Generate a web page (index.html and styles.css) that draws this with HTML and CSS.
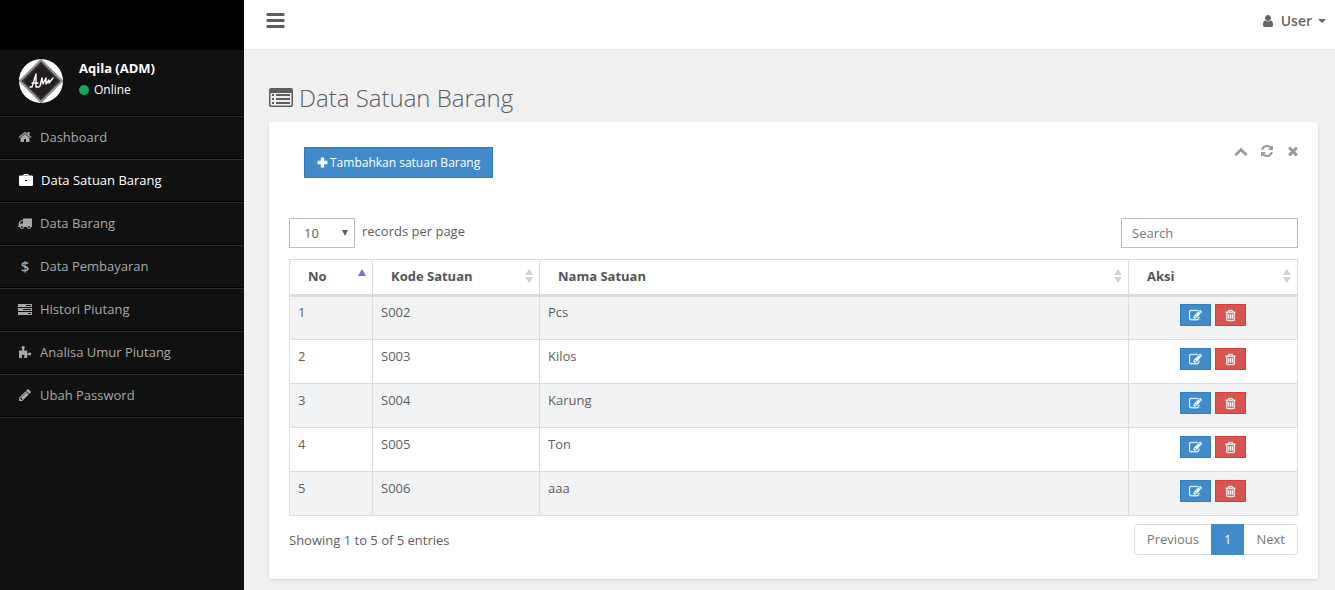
FILE: index.html
```html
<!DOCTYPE html>
<html lang="id">
<head>
<meta charset="utf-8">
<title>Data Satuan Barang</title>
<link rel="stylesheet" href="styles.css">
</head>
<body>
<svg class="sprite" aria-hidden="true">
  <symbol id="home" viewBox="0 0 1792 1792"><path d="M1472 992v480q0 26-19 45t-45 19h-384v-384h-256v384h-384q-26 0-45-19t-19-45v-480q0-1 .5-3t.5-3l575-474 575 474q1 2 1 6zm223-69l-62 74q-8 9-21 11h-3q-13 0-21-7l-692-577-692 577q-12 8-24 7-13-2-21-11l-62-74q-8-10-7-23.500t11-21.500l719-599q32-26 76-26t76 26l244 204v-195q0-14 9-23t23-9h192q14 0 23 9t9 23v408l219 182q10 8 11 21.500t-7 23.500z"/></symbol>
  <symbol id="briefcase" viewBox="0 0 14 14"><path fill-rule="evenodd" d="M4.500 2.500V1.500Q4.500 1 5 1H9Q9.500 1 9.500 1.500V2.500H12.800Q14 2.500 14 3.700V11.800Q14 13 12.800 13H1.200Q0 13 0 11.800V3.700Q0 2.500 1.200 2.500ZM5.500 2.500H8.500V2H5.500ZM6 7V8H8V7Z"/></symbol>
  <symbol id="truck" viewBox="0 0 14 14"><path fill-rule="evenodd" d="M5.500 2.500H13.500Q14 2.500 14 3V10.500Q14 11 13.500 11H12.900A1.900 1.900 0 0 1 9.100 11H5.900A1.900 1.900 0 0 1 2.100 11H.5Q0 11 0 10.500V10L.7 9.500V7Q.7 6.600 1 6.300L2.700 4.600Q3 4.300 3.500 4.300H5V3Q5 2.500 5.500 2.500ZM1.800 7.500H5V5.300H3.600L1.800 7ZM4 10.100A.9.9 0 1 0 4 11.900A.9.9 0 1 0 4 10.100ZM11 10.100A.9.9 0 1 0 11 11.900A.9.9 0 1 0 11 10.100Z"/></symbol>
  <symbol id="tasks" viewBox="0 0 14 14"><path fill-rule="evenodd" d="M0 2H14V5H0ZM8 3V4H13V3ZM0 6H14V9H0ZM5 7V8H13V7ZM0 10H14V13H0ZM10 11V12H13V11Z"/></symbol>
  <symbol id="puzzle" viewBox="0 0 14 14"><path d="M1 5.500H4.300Q4.500 4.500 3.900 3.700Q3.200 2.600 3.700 1.700Q4.200 1 5.200 1Q6.300 1 6.700 1.800Q7.100 2.700 6.400 3.700Q5.800 4.700 6.100 5.500H9.200V8.300Q9.900 8.700 10.700 8Q11.800 7.100 12.700 7.700Q13.300 8.200 13.200 9.200Q13.100 10.100 12.300 10.400Q11.500 10.700 10.700 10.100Q9.800 9.400 9.200 9.900V13H6.400Q5.700 12.300 6.300 11.500Q6.800 10.400 6 9.900Q5 9.400 4.100 10Q3.400 10.600 4 11.600Q4.400 12.400 3.900 13H1Z"/></symbol>
  <symbol id="pencil" viewBox="0 0 1792 1792"><path d="M491 1536l91-91-235-235-91 91v107h128v128h107zm523-928q0-22-22-22-10 0-17 7l-542 542q-7 7-7 17 0 22 22 22 10 0 17-7l542-542q7-7 7-17zm-54-192l416 416-832 832h-416v-416zm683 96q0 53-37 90l-166 166-416-416 166-165q36-38 90-38 53 0 91 38l235 234q37 39 37 91z"/></symbol>
  <symbol id="user" viewBox="0 0 1792 1792"><path d="M1536 1399q0 109-62.500 187t-150.500 78h-854q-88 0-150.500-78t-62.500-187q0-85 8.500-160.500t31.500-152 58.500-131 94-89 134.500-34.500q131 128 313 128t313-128q76 0 134.500 34.500t94 89 58.500 131 31.500 152 8.500 160.500zm-256-887q0 159-112.500 271.500t-271.500 112.500-271.500-112.500-112.500-271.500 112.500-271.500 271.500-112.500 271.500 112.500 112.500 271.500z"/></symbol>
  <symbol id="bars" viewBox="0 0 18 16"><path d="M.5 0H17.500L18 .5V2.500L17.500 3H.5L0 2.500V.5ZM.5 6H17.500L18 6.500V8.500L17.500 9H.5L0 8.500V6.500ZM.5 12H17.500L18 12.500V14.500L17.500 15H.5L0 14.500V12.500Z"/></symbol>
  <symbol id="list-alt" viewBox="0 0 25 20"><path fill-rule="evenodd" d="M2 0H22Q24 0 24 2V17Q24 19 22 19H2Q0 19 0 17V2Q0 0 2 0ZM1.500 5V16.500Q1.500 17.500 2.500 17.500H21.500Q22.500 17.500 22.500 16.500V5ZM3 6H5V8H3ZM7 6H21V8H7ZM3 10H5V12H3ZM7 10H21V12H7ZM3 14H5V16H3ZM7 14H21V16H7Z"/></symbol>
  <symbol id="plus" viewBox="0 0 10 10"><path d="M3.500.5H6.500V3.500H9.500V6.500H6.500V9.500H3.500V6.500H.5V3.500H3.500Z"/></symbol>
  <symbol id="up" viewBox="0 0 1792 1792"><path d="M1683 1331l-166 165q-19 19-45 19t-45-19l-531-531-531 531q-19 19-45 19t-45-19l-166-165q-19-19-19-45.500t19-45.500l742-741q19-19 45-19t45 19l742 741q19 19 19 45.500t-19 45.500z"/></symbol>
  <symbol id="refresh" viewBox="0 0 1792 1792"><path d="M1639 1056q0 5-1 7-64 268-268 434.500t-478 166.500q-146 0-282.500-55t-243.500-157l-129 129q-19 19-45 19t-45-19-19-45v-448q0-26 19-45t45-19h448q26 0 45 19t19 45-19 45l-137 137q71 66 161 102t187 36q134 0 250-65t186-179q11-17 53-117 8-23 30-23h192q13 0 22.500 9.500t9.500 22.500zm25-800v448q0 26-19 45t-45 19h-448q-26 0-45-19t-19-45 19-45l138-138q-148-137-349-137-134 0-250 65t-186 179q-11 17-53 117-8 23-30 23h-199q-13 0-22.500-9.500t-9.500-22.500v-7q65-268 270-434.500t480-166.500q146 0 284 55.500t245 156.500l130-129q19-19 45-19t45 19 19 45z"/></symbol>
  <symbol id="times" viewBox="0 0 1792 1792"><path d="M1490 1322q0 40-28 68l-136 136q-28 28-68 28t-68-28l-294-294-294 294q-28 28-68 28t-68-28l-136-136q-28-28-28-68t28-68l294-294-294-294q-28-28-28-68t28-68l136-136q28-28 68-28t68 28l294 294 294-294q28-28 68-28t68 28l136 136q28 28 28 68t-28 68l-294 294 294 294q28 28 28 68z"/></symbol>
  <symbol id="edit" viewBox="0 0 1792 1792"><path d="M888 1184l116-116-152-152-116 116v56h96v96h56zm440-720q-16-16-33 1l-350 350q-17 17-1 33t33-1l350-350q17-17 1-33zm80 594v190q0 119-84.500 203.500t-203.500 84.500h-832q-119 0-203.500-84.500t-84.500-203.500v-832q0-119 84.500-203.500t203.500-84.500h832q63 0 117 25 15 7 18 23 3 17-9 29l-49 49q-14 14-32 8-23-6-45-6h-832q-66 0-113 47t-47 113v832q0 66 47 113t113 47h832q66 0 113-47t47-113v-126q0-13 9-22l64-64q15-15 35-7t20 29zm-96-738l288 288-672 672h-288v-288zm444 132l-92 92-288-288 92-92q28-28 68-28t68 28l152 152q28 28 28 68t-28 68z"/></symbol>
  <symbol id="trash" viewBox="0 0 1792 1792"><path d="M704 736v576q0 14-9 23t-23 9h-64q-14 0-23-9t-9-23v-576q0-14 9-23t23-9h64q14 0 23 9t9 23zm256 0v576q0 14-9 23t-23 9h-64q-14 0-23-9t-9-23v-576q0-14 9-23t23-9h64q14 0 23 9t9 23zm256 0v576q0 14-9 23t-23 9h-64q-14 0-23-9t-9-23v-576q0-14 9-23t23-9h64q14 0 23 9t9 23zm128 724v-948h-896v948q0 22 7 40.500t14.500 27 10.500 8.500h832q3 0 10.500-8.500t14.500-27 7-40.500zm-672-1076h448l-48-117q-7-9-17-11h-317q-10 2-17 11zm928 32v64q0 14-9 23t-23 9h-96v948q0 83-47 143.500t-113 60.500h-832q-66 0-113-58.500t-47-141.500v-952h-96q-14 0-23-9t-9-23v-64q0-14 9-23t23-9h309l70-167q15-37 54-63t79-26h320q40 0 79 26t54 63l70 167h309q14 0 23 9t9 23z"/></symbol>
  <symbol id="down-tri" viewBox="0 0 8 6"><path d="M1 0H7L4 6Z"/></symbol>
  <symbol id="caret" viewBox="0 0 8 4"><path d="M0 0H8L4 4Z"/></symbol>
  <symbol id="sort" viewBox="0 0 8 14"><path d="M0 6L4 0L8 6ZM0 8H8L4 14Z"/></symbol>
  <symbol id="sort-asc" viewBox="0 0 8 14"><path d="M0 7L4 0L8 7Z"/></symbol>
</svg>
<div class="app">
  <aside class="sidebar">
    <div class="brand"></div>
    <div class="profile">
      <svg class="avatar" viewBox="0 0 46 46" role="img" aria-label="Aqila">
        <circle cx="23" cy="23" r="22" fill="#fff"/>
        <path d="M23 1L45 23L23 45L1 23Z" fill="#333"/>
        <path d="M23 2.500L43.500 23L23 43.500L2.500 23Z" fill="none" stroke="#999" stroke-width="1.500"/>
        <path d="M23 6L40 23L23 40L6 23Z" fill="#211d1d"/>
        <path d="M12 29L14 29L18 16L18 29L21 29M14 25L20 25M22 28L24 20L25 26L28 20L28 26L31 22L31 25L35 20" fill="none" stroke="#fff" stroke-width="1.400" stroke-linecap="round" stroke-linejoin="round"/>
      </svg>
      <div class="who">
        <strong>Aqila (ADM)</strong>
        <span class="status"><i class="dot"></i>Online</span>
      </div>
    </div>
    <nav class="menu">
      <a href="#"><svg class="icon"><use href="#home"/></svg>Dashboard</a>
      <a href="#" class="active"><svg class="icon"><use href="#briefcase"/></svg>Data Satuan Barang</a>
      <a href="#"><svg class="icon"><use href="#truck"/></svg>Data Barang</a>
      <a href="#"><span class="icon dollar" aria-hidden="true">$</span>Data Pembayaran</a>
      <a href="#"><svg class="icon"><use href="#tasks"/></svg>Histori Piutang</a>
      <a href="#"><svg class="icon"><use href="#puzzle"/></svg>Analisa Umur Piutang</a>
      <a href="#"><svg class="icon"><use href="#pencil"/></svg>Ubah Password</a>
    </nav>
  </aside>
  <div class="main">
    <header class="topbar">
      <button class="plain" aria-label="Menu"><svg class="bars"><use href="#bars"/></svg></button>
      <button class="plain user"><svg class="icon"><use href="#user"/></svg>User<svg class="caret"><use href="#caret"/></svg></button>
    </header>
    <main class="content">
      <h1><svg class="title-icon"><use href="#list-alt"/></svg>Data Satuan Barang</h1>
      <section class="card">
        <div class="card-head">
          <button class="add"><svg class="plus"><use href="#plus"/></svg>Tambahkan satuan Barang</button>
          <div class="tools">
            <button class="plain" aria-label="Collapse"><svg class="icon"><use href="#up"/></svg></button>
            <button class="plain" aria-label="Refresh"><svg class="icon"><use href="#refresh"/></svg></button>
            <button class="plain" aria-label="Close"><svg class="icon"><use href="#times"/></svg></button>
          </div>
        </div>
        <div class="filters">
          <label class="length"><span class="select-wrap"><select><option>10</option><option>25</option><option>50</option></select><svg class="arrow"><use href="#down-tri"/></svg></span>records per page</label>
          <input class="search" type="text" placeholder="Search" aria-label="Search">
        </div>
        <table>
          <colgroup><col class="c-no"><col class="c-code"><col><col class="c-act"></colgroup>
          <thead>
            <tr>
              <th><div class="th asc">No<svg><use href="#sort-asc"/></svg></div></th>
              <th><div class="th">Kode Satuan<svg><use href="#sort"/></svg></div></th>
              <th><div class="th">Nama Satuan<svg><use href="#sort"/></svg></div></th>
              <th><div class="th">Aksi<svg><use href="#sort"/></svg></div></th>
            </tr>
          </thead>
          <tbody>
            <tr><td>1</td><td>S002</td><td>Pcs</td><td><div class="actions"><button class="edit" aria-label="Edit"><svg><use href="#edit"/></svg></button><button class="delete" aria-label="Delete"><svg><use href="#trash"/></svg></button></div></td></tr>
            <tr><td>2</td><td>S003</td><td>Kilos</td><td><div class="actions"><button class="edit" aria-label="Edit"><svg><use href="#edit"/></svg></button><button class="delete" aria-label="Delete"><svg><use href="#trash"/></svg></button></div></td></tr>
            <tr><td>3</td><td>S004</td><td>Karung</td><td><div class="actions"><button class="edit" aria-label="Edit"><svg><use href="#edit"/></svg></button><button class="delete" aria-label="Delete"><svg><use href="#trash"/></svg></button></div></td></tr>
            <tr><td>4</td><td>S005</td><td>Ton</td><td><div class="actions"><button class="edit" aria-label="Edit"><svg><use href="#edit"/></svg></button><button class="delete" aria-label="Delete"><svg><use href="#trash"/></svg></button></div></td></tr>
            <tr><td>5</td><td>S006</td><td>aaa</td><td><div class="actions"><button class="edit" aria-label="Edit"><svg><use href="#edit"/></svg></button><button class="delete" aria-label="Delete"><svg><use href="#trash"/></svg></button></div></td></tr>
          </tbody>
        </table>
        <div class="card-foot">
          <span>Showing 1 to 5 of 5 entries</span>
          <nav class="pager" aria-label="Pages"><a href="#">Previous</a><a href="#" class="current">1</a><a href="#">Next</a></nav>
        </div>
      </section>
    </main>
  </div>
</div>
</body>
</html>
```

FILE: styles.css
```css
* { box-sizing: border-box; }
body {
  margin: 0;
  background: #f0f0f0;
  color: #5e5e5e;
  font: 13px/20px "Open Sans", sans-serif;
}
button, input, select { font: inherit; color: inherit; }
button { cursor: pointer; }
a { color: inherit; text-decoration: none; }
svg { display: block; fill: currentColor; flex: none; }
.sprite { position: absolute; width: 0; height: 0; }
.icon { width: 14px; height: 14px; }
.plain { border: 0; padding: 0; background: none; }

.app { display: flex; min-height: 100vh; }
.sidebar { width: 244px; flex: none; background: #111; }
.brand { height: 50px; background: #000; }
.profile {
  display: flex;
  gap: 15px;
  height: 66px;
  padding: 8px 18px;
  border-bottom: 1px solid #000;
  color: #fff;
}
.avatar { width: 46px; height: 46px; }
.who { display: flex; flex-direction: column; gap: 2px; }
.status { display: flex; align-items: center; gap: 5px; font-size: 12px; }
.dot { width: 10px; height: 10px; border-radius: 50%; background: #0fa958; }
.menu a {
  display: flex;
  align-items: center;
  gap: 8px;
  height: 43px;
  padding: 0 18px 2px;
  border-top: 1px solid #2e2e2e;
  border-bottom: 1px solid #000;
  color: #a8a8a8;
}
.menu { border-bottom: 1px solid #2e2e2e; }
.menu .active { color: #fff; padding-left: 19px; }
.dollar { font-weight: 600; font-size: 15px; line-height: 14px; text-align: center; }

.main { flex: 1; min-width: 0; }
.topbar {
  display: flex;
  justify-content: space-between;
  height: 50px;
  padding: 11px 9px 0 22px;
  background: #fff;
  border-bottom: 1px solid #e7e7e7;
}
.topbar .plain { height: 20px; }
.bars { width: 19px; height: 16px; }
.user { display: flex; align-items: center; gap: 6px; font-size: 14px; font-weight: 600; color: #666; }
.caret { width: 8px; height: 4px; }
.content { padding: 32px 17px 0 25px; }
h1 {
  display: flex;
  align-items: center;
  gap: 5px;
  margin: 0 0 9px;
  font-size: 24px;
  line-height: 31px;
  font-weight: 300;
}
.title-icon { width: 25px; height: 20px; }
.card {
  padding: 25px 20px 24px;
  background: #fff;
  border-radius: 2px;
  box-shadow: 0 1px 3px rgba(0, 0, 0, .12);
}
.card-head { display: flex; justify-content: space-between; align-items: flex-start; padding-left: 15px; }
.add {
  display: flex;
  align-items: center;
  gap: 2px;
  height: 31px;
  padding: 0 12px;
  border: 1px solid #357ebd;
  background: #428bca;
  color: #fff;
  font-size: 12px;
}
.plus { width: 11px; height: 11px; }
.tools { display: flex; gap: 12px; margin-right: -2px; color: #999; }
.tools .plain { height: 14px; margin-top: -3px; }
.filters { display: flex; justify-content: space-between; margin-top: 40px; }
.length { display: flex; gap: 7px; line-height: 27px; }
.select-wrap { position: relative; }
select {
  display: block;
  width: 66px;
  height: 30px;
  padding: 0 14px;
  border: 1px solid #bbb;
  border-radius: 0;
  background: #fff;
  appearance: none;
}
.arrow { position: absolute; right: 6px; top: 12px; width: 8px; height: 6px; pointer-events: none; }
.search { width: 177px; height: 30px; padding: 0 10px; border: 1px solid #bbb; }
.search::placeholder { color: #777; opacity: 1; }

table { width: 100%; margin-top: 11px; border-collapse: collapse; table-layout: fixed; }
.c-no { width: 83px; }
.c-code { width: 167px; }
.c-act { width: 169px; }
th, td { border: 1px solid #ddd; text-align: left; }
th { height: 36px; padding: 0 6px 2px 18px; border-bottom-width: 3px; }
.th { display: flex; align-items: center; justify-content: space-between; color: #555; }
.th svg { width: 8px; height: 14px; color: #d3d3d3; }
.th.asc svg { color: #7474cf; }
td { height: 44px; padding: 8px; vertical-align: top; line-height: 16px; }
tbody tr:first-child td { padding-top: 7px; }
tbody tr:nth-child(odd) { background: #f1f3f5; }
.actions { display: flex; justify-content: center; gap: 4px; }
.actions button {
  display: flex;
  align-items: center;
  justify-content: center;
  width: 31px;
  height: 22px;
  padding: 0;
  border: 1px solid #357ebd;
  background: #428bca;
  color: #fff;
}
.actions .delete { border-color: #d43f3a; background: #d9534f; }
.actions svg { width: 13px; height: 13px; stroke: #fff; stroke-width: 40px; }
.card-foot { display: flex; justify-content: space-between; align-items: center; margin-top: 8px; }
.pager { display: flex; color: #777; }
.pager a { height: 31px; padding: 4px 12px; border: 1px solid #ddd; margin-left: -1px; }
.pager a:first-child { border-radius: 4px 0 0 4px; }
.pager a:last-child { border-radius: 0 4px 4px 0; }
.pager .current { z-index: 1; border-color: #428bca; background: #428bca; color: #fff; }
```
